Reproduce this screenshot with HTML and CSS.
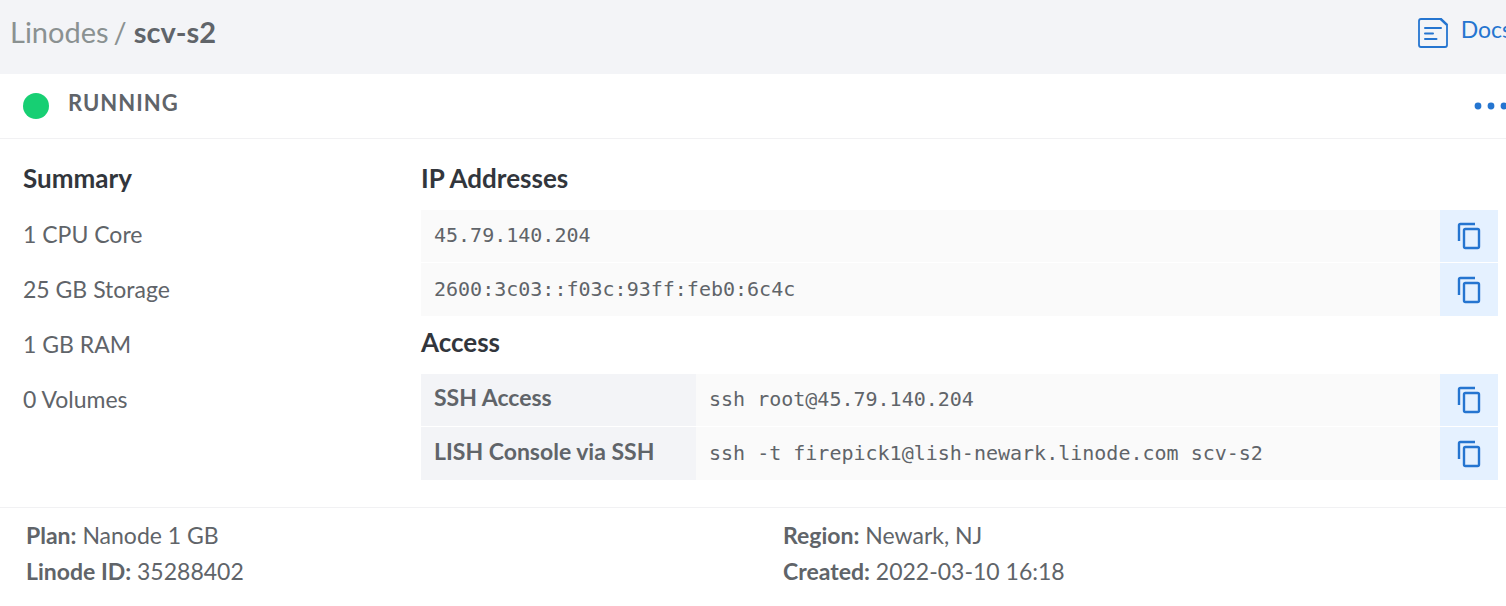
FILE: index.html
```html
<!DOCTYPE html>
<html lang="en">
<head>
<meta charset="utf-8">
<meta name="viewport" content="width=device-width, initial-scale=1">
<title>scv-s2 | Linodes</title>
<link rel="stylesheet" href="styles.css">
</head>
<body>
<svg class="sprite" aria-hidden="true">
  <symbol id="copy" viewBox="0 0 24 28">
    <path d="M2 19V3.4Q2 2 3.4 2H18" fill="none" stroke="currentColor" stroke-width="2.4"/>
    <rect x="7" y="7" width="15" height="19" rx="1.4" fill="none" stroke="currentColor" stroke-width="2.4"/>
  </symbol>
</svg>
<header class="topbar">
  <nav class="crumbs" aria-label="Breadcrumb">
    <a class="crumb-link" href="#">Linodes</a>
    <span class="crumb-slash">/</span>
    <h1 class="crumb-current">scv-s2</h1>
  </nav>
  <a class="docs" href="#">
    <svg class="docs-icon" viewBox="0 0 30 30" fill="none" stroke="currentColor" aria-hidden="true">
      <path d="M3 1H23.2L29 6.4V27Q29 29 27 29H3Q1 29 1 27V3Q1 1 3 1Z" stroke-width="1.8"/>
      <path d="M22.6 1.2L28.8 7" stroke-width="2"/>
      <path d="M7 10H23M7 15.5H15M7 21H18.5" stroke-width="2" stroke-linecap="round"/>
    </svg>
    <span>Docs</span>
  </a>
</header>
<main>
  <div class="status">
    <span class="status-dot"></span>
    <span class="status-text">RUNNING</span>
    <button class="more" type="button" aria-label="More actions">
      <svg class="more-icon" viewBox="0 0 34 8" fill="currentColor" aria-hidden="true"><circle cx="4" cy="4" r="3.4"/><circle cx="17" cy="4" r="3.4"/><circle cx="30" cy="4" r="3.4"/></svg>
    </button>
  </div>
  <div class="details">
    <section class="summary">
      <h2 class="heading">Summary</h2>
      <ul class="specs">
        <li>1 CPU Core</li>
        <li>25 GB Storage</li>
        <li>1 GB RAM</li>
        <li>0 Volumes</li>
      </ul>
    </section>
    <div class="network">
      <section>
        <h2 class="heading">IP Addresses</h2>
        <table class="grid">
          <tr><td class="code">45.79.140.204</td><td class="action"><button class="copy" type="button" aria-label="Copy IPv4 address"><svg class="copy-icon"><use href="#copy"/></svg></button></td></tr>
          <tr><td class="code">2600:3c03::f03c:93ff:feb0:6c4c</td><td class="action"><button class="copy" type="button" aria-label="Copy IPv6 address"><svg class="copy-icon"><use href="#copy"/></svg></button></td></tr>
        </table>
      </section>
      <section>
        <h2 class="heading">Access</h2>
        <table class="grid">
          <tr><th class="label" scope="row">SSH Access</th><td class="code">ssh root@45.79.140.204</td><td class="action"><button class="copy" type="button" aria-label="Copy SSH command"><svg class="copy-icon"><use href="#copy"/></svg></button></td></tr>
          <tr><th class="label" scope="row">LISH Console via SSH</th><td class="code">ssh -t firepick1@lish-newark.linode.com scv-s2</td><td class="action"><button class="copy" type="button" aria-label="Copy LISH command"><svg class="copy-icon"><use href="#copy"/></svg></button></td></tr>
        </table>
      </section>
    </div>
  </div>
</main>
<footer class="meta">
  <dl class="facts">
    <div><dt>Plan:</dt> <dd>Nanode 1 GB</dd></div>
    <div><dt>Linode ID:</dt> <dd>35288402</dd></div>
  </dl>
  <dl class="facts">
    <div><dt>Region:</dt> <dd>Newark, NJ</dd></div>
    <div><dt>Created:</dt> <dd>2022-03-10 16:18</dd></div>
  </dl>
</footer>
</body>
</html>
```
FILE: styles.css
```css
* { box-sizing: border-box; }
body {
  margin: 0;
  overflow-x: hidden;
  background: #fff;
  color: #606469;
  font: 23px/36px Lato, sans-serif;
}
h1, h2, ul, dl, dd { margin: 0; padding: 0; }
button { border: 0; padding: 0; background: none; color: #2575d0; cursor: pointer; }
a { text-decoration: none; }
svg { display: block; }
.sprite { position: absolute; width: 0; height: 0; }

.topbar {
  display: flex;
  justify-content: space-between;
  align-items: flex-start;
  padding: 12px 0 22px 10px;
  background: #f3f4f7;
  overflow: hidden;
}
.crumbs { display: flex; font-size: 29px; line-height: 40px; }
.crumb-link { color: #8a9191; }
.crumb-slash { margin: 0 7px 0 5px; color: #8a9191; }
.crumb-current { font-size: 29px; font-weight: 700; }
.docs {
  display: flex;
  gap: 13px;
  margin-right: -6px;
  color: #2575d0;
  line-height: 34px;
}
.docs-icon { width: 30px; height: 30px; margin-top: 6px; }

.status {
  display: flex;
  align-items: center;
  height: 65px;
  padding-left: 23px;
  border-bottom: 1px solid #f1f1f3;
  overflow: hidden;
}
.status-dot { width: 26px; height: 26px; border-radius: 50%; background: #17cf73; }
.status-text {
  margin: 0 auto 6px 19px;
  font-size: 22px;
  font-weight: 700;
  letter-spacing: 1px;
}
.more { margin-right: -2px; }
.more-icon { width: 34px; height: 8px; }

.details { display: flex; padding: 20px 8px 27px 23px; }
.summary { flex: 0 0 398px; }
.network { flex: 1; }
.heading {
  color: #32363c;
  font-size: 26px;
  font-weight: 700;
  line-height: 38px;
  margin-bottom: 13px;
}
.specs { list-style: none; line-height: 55px; margin-top: -3px; }
.grid { width: 100%; border-spacing: 0; }
.grid td, .grid th { height: 52px; padding: 0; }
.grid tr + tr > * { height: 54px; border-top: 1px solid #fff; }
.network section + section { margin-top: 7px; }
.label {
  width: 275px;
  background: #f3f4f7;
  text-align: left;
  white-space: nowrap;
}
.grid .label { padding: 0 13px 6px; }
.grid .code {
  padding: 0 13px 2px;
  background: #fafafa;
  font: 20px/36px "DejaVu Sans Mono", monospace;
}
.action { width: 58px; background: #e5f1ff; }
.copy { display: grid; place-items: center; width: 100%; height: 52px; }
.copy-icon { width: 24px; height: 28px; }

.meta {
  display: grid;
  grid-template-columns: 1fr 1fr;
  column-gap: 34px;
  padding: 9px 0 16px 26px;
  border-top: 1px solid #f1f1f3;
}
dt, dd { display: inline; }
dt { font-weight: 700; }
```
